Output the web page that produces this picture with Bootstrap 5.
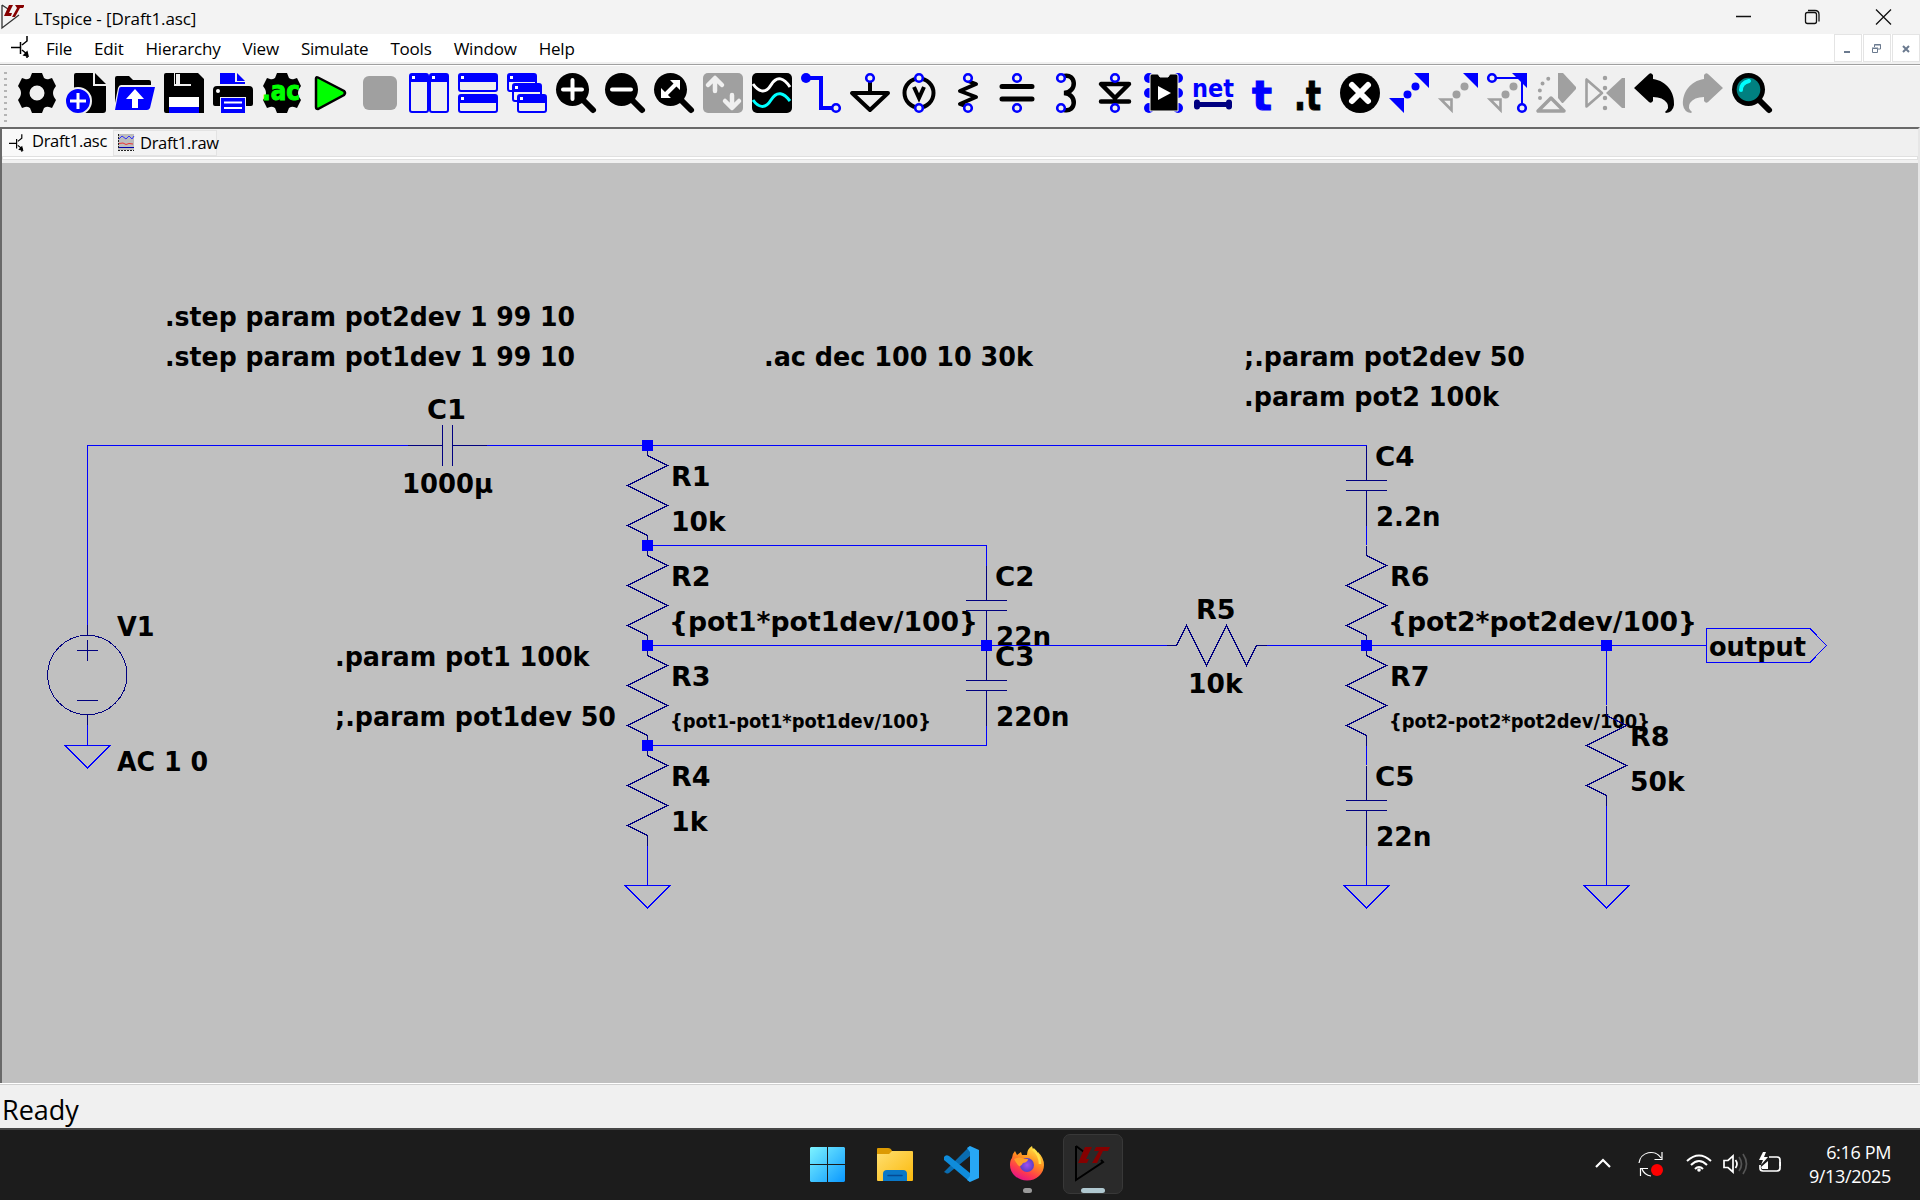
<!DOCTYPE html>
<html lang="en">
<head>
<meta charset="utf-8">
<title>LTspice - [Draft1.asc]</title>
<link href="https://cdn.jsdelivr.net/npm/bootstrap@5.3.0/dist/css/bootstrap.min.css" rel="stylesheet">
<style>
body{font-family:"Open Sans","Noto Sans",sans-serif;color:#000;width:1920px;height:1200px;overflow:hidden;background:#f0f0f0;line-height:1}
svg{display:block;flex:none}
.titlebar{height:34px;background:#f3f3f3;font-size:17px}
.title-text{letter-spacing:-.1px;padding:2px 0 0 10px}
.menubar{height:30px;background:#fff;font-size:17px;border-bottom:2px solid #f0f0f0}
.menu-items{gap:22px;padding-left:17px;letter-spacing:-.2px}
.mdi-group{gap:1px}
.mdi{width:28px;height:28px;border:1px solid #e4e4e4}
.toolbar{height:63px;border-top:1px solid #a0a0a0;box-shadow:inset 0 1px #fff;padding:8px 0 0 4px}
.grip{width:3px;height:54px;margin:-3px 10px 0 0;background:radial-gradient(circle,#b4b4b4 1.3px,transparent 1.5px) 0 0/3px 6px}
.tools{gap:9px}
.tools svg{overflow:visible}
.workframe{height:956px;border-top:2px solid #696969;border-left:2px solid #696969;border-right:2px solid #e6e6e6}
.tabs{height:34px;font-size:16.5px;letter-spacing:-.3px}
.tabrow{height:27px}
.tab-on{width:111px;height:27px;background:#f9f9f9;padding:0 0 2px 7px}
.tab-off{width:104px;height:26px;border:1px solid #e3e3e3;background:#f3f3f3;padding-left:4px;margin-top:1px}
.tabrule{height:4px;border:1px solid #e0e0e0;background:#fff}
.sheet{height:920px;background:#c0c0c0}
.statusbar{height:45px;border-top:1px solid #fff;box-shadow:inset 0 1px #d0d0d0;font-size:27px;padding:6px 0 0 2px}
.taskbar{height:72px;border-top:2px solid #464646;background:#1c1c1c;color:#fff}
.dock{padding-left:810px}
.dock-icons{width:253px}
.dock-tile{width:60px;height:60px;border:1px solid #383838;border-radius:7px;background:#2a2a2a}
.tray{width:190px}
.clock{font-size:18px;line-height:24px;letter-spacing:-.35px;width:110px;margin-right:29px;margin-bottom:2px}
.w{stroke:#00f;fill:none}.n{stroke:#000080;fill:none}
.sheet text{font:bold 27px "DejaVu Sans Condensed","DejaVu Sans",sans-serif;fill:#000}
.sheet text.sm{font-size:19px}
.tools text{font-family:"DejaVu Sans",sans-serif;font-weight:bold}
</style>
</head>
<body class="d-flex flex-column">
<header class="titlebar d-flex align-items-center">
  <svg width="24" height="34"><use href="#lt" x="1" y="4"/></svg>
  <span class="title-text">LTspice - [Draft1.asc]</span>
  <svg class="ms-auto" width="186" height="34" fill="none" stroke="#111" stroke-width="1.3"><path d="M2 16.500h15M142 9.500l15 15m0-15l-15 15"/><rect x="71.500" y="12.500" width="11" height="11" rx="2"/><path d="M74 10.500h7q4 0 4 4v7"/></svg>
</header>
<nav class="menubar d-flex align-items-center">
  <svg width="29" height="28"><use href="#npn" x="11" y="2"/></svg>
  <div class="menu-items d-flex"><span>File</span><span>Edit</span><span>Hierarchy</span><span>View</span><span>Simulate</span><span>Tools</span><span>Window</span><span>Help</span></div>
  <div class="mdi-group d-flex ms-auto">
    <div class="mdi"><svg width="26" height="26"><path d="M9 16h6v2H9z" fill="#6b7a8f"/></svg></div>
    <div class="mdi"><svg width="26" height="26" fill="none" stroke="#6b7a8f"><path d="M8.500 13.500h5v4h-5zM8 13h6M10.500 12v-2.500h6v4.500H14M10.500 10h6"/></svg></div>
    <div class="mdi"><svg width="26" height="26"><path d="M10 11l6 6m0-6l-6 6" stroke="#6b7a8f" stroke-width="2"/></svg></div>
  </div>
</nav>
<div class="toolbar d-flex">
 <div class="grip"></div>
 <div class="tools d-flex">
  <svg width="40" height="40"><path id="gear" fill-rule="evenodd" d="M15 0h10l2 5q3 2 5 1l3-1 4 8-2 3q-2 4 0 8l2 3-4 8-3-1q-2-1-5 1l-2 5H15l-2-5q-3-2-5-1l-3 1-4-8 2-3q2-4 0-8l-2-3 4-8 3 1q2 1 5-1zM20 12.500a7.500 7.500 0 100 15 7.500 7.500 0 000-15z"/></svg>
  <svg width="40" height="40"><path d="M10 0h17v13h13v24q0 3-3 3H8V2q0-2 2-2zM29 0l11 11H29z"/><circle cx="12" cy="28" r="13" fill="#00f" stroke="#f0f0f0" stroke-width="2"/><path d="M12 20v16M4 28h16" stroke="#fff" stroke-width="3"/></svg>
  <svg width="40" height="40"><path d="M0 30V5q0-2 2-2h12l4 4h16q2 0 2 2v3H6q-2 0-3 3z"/><path d="M6 14h34l-5 21q-1 2-3 2H0L4 16q0-2 2-2z" fill="#00f"/><path d="M20 16l9 10h-6v9h-6v-9h-6z" fill="#fff"/></svg>
  <svg width="40" height="40"><path d="M0 2q0-2 2-2h32l6 6v34H2q-2 0-2-2z"/><path d="M10 0h17v13H10z" fill="#f0f0f0"/><path d="M11 0h16v11H11z"/><path d="M12 1h4v10h-4z" fill="#f0f0f0"/><path d="M5 24h30v10H5z" fill="#fff"/><path d="M5 34h30v6H5z" fill="#00f"/></svg>
  <svg width="40" height="40"><path d="M7 11V0h15v11zM24 0l8 8h-8zM22 9h10v2H22z" fill="#00f"/><path d="M4 13h32q4 0 4 4v14q0 2-2 2h-5v-9H7v9H2q-2 0-2-2V17q0-4 4-4z"/><circle cx="5" cy="18" r="2" fill="#fff"/><path d="M8 25h24v15H8z" fill="#00f"/><path d="M11 29.500h18M11 35h18" stroke="#fff" stroke-width="2"/></svg>
  <svg width="40" height="40"><use href="#gear"/><circle cx="20" cy="20" r="9"/><text x="0" y="27" font-size="26" fill="#0f0" stroke="#0f0" textLength="38" lengthAdjust="spacingAndGlyphs">.ac</text></svg>
  <svg width="40" height="40"><path d="M5 5.500q0-2 2-1L33 18q2 2 0 4L7 36q-2 0-2-2z" fill="#0f0" stroke="#000" stroke-width="2.500"/></svg>
  <svg width="40" height="40"><rect x="3" y="3" width="34" height="34" rx="6" fill="#a0a0a0"/></svg>
  <svg width="40" height="40"><g id="win"><rect x="1" y="1" width="18" height="38" rx="2" fill="#f0f0f0" stroke="#00f" stroke-width="2"/><path d="M1 1h18v8H1z" fill="#00f"/><path d="M3 3h3v3H3z" fill="#fff"/></g><use href="#win" x="20"/></svg>
  <svg width="40" height="40"><g id="row2"><rect x="1" y="1" width="38" height="17" rx="2" fill="#f0f0f0" stroke="#00f" stroke-width="2"/><path d="M1 1h38v8H1z" fill="#00f"/><path d="M3 3h3v3H3z" fill="#fff"/></g><use href="#row2" y="21"/></svg>
  <svg width="40" height="40"><g id="cas"><rect x="0" y="0" width="30" height="20" fill="#f0f0f0"/><rect x="1" y="1" width="28" height="17" rx="2" fill="#f0f0f0" stroke="#00f" stroke-width="2"/><path d="M1 1h28v8H1z" fill="#00f"/><path d="M3 3h3v3H3z" fill="#fff"/></g><use href="#cas" x="5" y="10"/><use href="#cas" x="10" y="21"/></svg>
  <svg width="40" height="40"><g id="mag"><circle cx="16.500" cy="16.500" r="16.500"/><path d="M26 26l11 11" stroke="#000" stroke-width="6" stroke-linecap="round"/></g><path d="M16.500 7v19M7 16.500h19" stroke="#fff" stroke-width="4" stroke-linecap="round"/></svg>
  <svg width="40" height="40"><use href="#mag"/><path d="M7 16.500h19" stroke="#fff" stroke-width="4" stroke-linecap="round"/></svg>
  <svg width="40" height="40"><use href="#mag"/><path d="M10 23L23 10" stroke="#fff" stroke-width="4"/><path d="M16 7h10v10zM7 15v10h10z" fill="#fff"/></svg>
  <svg width="40" height="40"><rect width="40" height="40" rx="5" fill="#a0a0a0"/><path d="M12 6v12M5 12l7-7 7 7M29 22v12M22 28l7 7 7-7" fill="none" stroke="#f0f0f0" stroke-width="4.500" stroke-linecap="round" stroke-linejoin="round"/></svg>
  <svg width="40" height="40"><rect width="40" height="40" rx="5"/><path d="M1 11c5 7 12 11 18 1s13-7 19 2" fill="none" stroke="#fff" stroke-width="3"/><path d="M1 27c5 7 12 10 18 0s13-7 19 1" fill="none" stroke="#0ff" stroke-width="3"/></svg>
  <svg width="40" height="40"><path d="M5 5h15v30h14" fill="none" stroke="#00f" stroke-width="4"/><circle cx="5" cy="5" r="5" fill="#00f"/><circle cx="35" cy="35" r="3.800" fill="#f0f0f0" stroke="#00f" stroke-width="2.600"/></svg>
  <svg width="40" height="40"><path d="M20 8v12M2 20h36L20 37z" fill="none" stroke="#000" stroke-width="4" stroke-linejoin="round"/><circle id="pin" cx="20" cy="5" r="3.800" fill="#f0f0f0" stroke="#00f" stroke-width="2.600"/></svg>
  <svg width="40" height="40"><circle cx="20" cy="20" r="14.500" fill="none" stroke="#000" stroke-width="4"/><path d="M15 14l5 11 5-11" fill="none" stroke="#000" stroke-width="4"/><use href="#pin"/><use href="#pin" y="30"/></svg>
  <svg width="40" height="40"><path d="M20 8l8 3-16 7 16 6-16 7 8 3" fill="none" stroke="#000" stroke-width="4" stroke-linejoin="round" stroke-linecap="round"/><use href="#pin"/><use href="#pin" y="30"/></svg>
  <svg width="40" height="40"><path d="M5 13.500h30M5 26h30" stroke="#000" stroke-width="5" stroke-linecap="round"/><use href="#pin"/><use href="#pin" y="30"/></svg>
  <svg width="40" height="40"><path d="M18 3c12-3 14 16 0 17c14 1 12 20 0 17" fill="none" stroke="#000" stroke-width="4.500"/><use href="#pin" x="-5"/><use href="#pin" x="-5" y="30"/></svg>
  <svg width="40" height="40"><path d="M6 11h28L20 25zM6 28.500h28" fill="none" stroke="#000" stroke-width="4.500" stroke-linejoin="round" stroke-linecap="round"/><use href="#pin"/><use href="#pin" y="30"/></svg>
  <svg width="40" height="40"><g fill="#00f"><circle cx="5" cy="5" r="5"/><circle cx="5" cy="20" r="5"/><circle cx="5" cy="35" r="5"/><circle cx="34" cy="5" r="5"/><circle cx="34" cy="20" r="5"/><circle cx="34" cy="35" r="5"/></g><path d="M8 1h6l2 3h8l2-3h6q2 0 2 2v35H6V3q0-2 2-2z" stroke="#f0f0f0"/><path d="M14 13v14l13-7z" fill="#fff"/></svg>
  <svg width="40" height="40"><text x="-1" y="24" font-size="25" fill="#00f" textLength="42" lengthAdjust="spacingAndGlyphs">net</text><path d="M4 31.500h32" stroke="#000080" stroke-width="5"/><path d="M4 29.500v4M36 29.500v4" stroke="#000080" stroke-width="6" stroke-linecap="round"/></svg>
  <svg width="40" height="40"><text x="10" y="36.500" font-size="40" fill="#00f" stroke="#00f" textLength="20" lengthAdjust="spacingAndGlyphs">t</text></svg>
  <svg width="40" height="40"><text x="3" y="36.500" font-size="40" stroke="#000" textLength="27" lengthAdjust="spacingAndGlyphs">.t</text></svg>
  <svg width="40" height="40"><circle cx="20" cy="20" r="20"/><path d="M12 12l16 16m0-16L12 28" stroke="#fff" stroke-width="6" stroke-linecap="round"/></svg>
  <svg width="40" height="40" fill="#00f"><path d="M25 0h15v15zM0 25h15v15z"/><circle cx="18.500" cy="21.500" r="4"/><circle cx="26.500" cy="13.500" r="4"/></svg>
  <svg width="40" height="40" fill="#a0a0a0"><path d="M25 0h15v15z" fill="#00f"/><path d="M3 26.500h10.500v10.500z" fill="none" stroke="#a0a0a0" stroke-width="2.600"/><circle cx="18.500" cy="21.500" r="4"/><circle cx="26.500" cy="13.500" r="4"/></svg>
  <svg width="40" height="40" fill="#a0a0a0"><path d="M3 26.500h10.500v10.500z" fill="none" stroke="#a0a0a0" stroke-width="2.600"/><circle cx="18.500" cy="21.500" r="4"/><circle cx="26.500" cy="13.500" r="4"/><path d="M8 5h27v26" fill="none" stroke="#00f" stroke-width="2"/><path d="M25 0h15v15z" fill="#00f"/><use href="#pin" x="-15"/><use href="#pin" x="15" y="30"/></svg>
  <svg width="40" height="40" fill="#a0a0a0"><path d="M22 0h5l13 14v2L27 30h-1l-4-5z"/><path d="M2 38h26L15 25z" fill="#f0f0f0" stroke="#a0a0a0" stroke-width="3.500" stroke-linejoin="round"/><path d="M4 25c-2-12 4-20 15-21" fill="none" stroke="#a0a0a0" stroke-width="4" stroke-linecap="round" stroke-dasharray="0 7.500"/></svg>
  <svg width="40" height="40" fill="#a0a0a0"><path d="M40 5v30h-3L21 20 37 5z"/><path d="M1.500 6.500v27L17 20z" fill="none" stroke="#a0a0a0" stroke-width="2.600" stroke-linejoin="round"/><path d="M20 5v32" stroke="#a0a0a0" stroke-width="4.500" stroke-linecap="round" stroke-dasharray="0 10"/></svg>
  <svg width="40" height="40"><path id="undo" d="M0 15L15 1q2-2 4 1v4C33 8 41 20 40 32q-1 7-8 8l-1-1q5-4 2-9-4-6-14-6v4q-2 3-4 1z"/></svg>
  <svg width="40" height="40" fill="#a0a0a0"><use href="#undo" transform="matrix(-1 0 0 1 40 0)"/></svg>
  <svg width="40" height="40"><use href="#mag"/><circle cx="16.500" cy="16.500" r="11.800" fill="#008080"/><path d="M9 17q0-7 8-9" fill="none" stroke="#0ff" stroke-width="4" stroke-linecap="round"/></svg>
 </div>
</div>
<main class="workframe">
 <div class="tabs">
  <div class="tabrow d-flex">
   <div class="tab-on d-flex align-items-center"><svg width="23" height="22"><use href="#npn" transform="scale(.8)" x="0" y="4"/></svg><span>Draft1.asc</span></div>
   <div class="tab-off d-flex align-items-center"><svg width="22" height="18"><path d="M0 0h16v16H0z" fill="#bdbdbd"/><path d="M1 5l3-3 4 3 3-3 3 3 2-3" fill="none" stroke="#33f"/><path d="M1 9.500l4-.5 3 1.500 3-1 4 .5" fill="none" stroke="#e33"/><path d="M0 13.500h16" stroke="#00a"/><path d="M0 16.500h16M.5 0v14" stroke="#222" stroke-dasharray="2 1"/></svg><span>Draft1.raw</span></div>
  </div>
  <div class="tabrule"></div>
 </div>
 <svg class="sheet" width="1916" height="920" viewBox="2 163 1916 920" shape-rendering="crispEdges">
  <defs>
   <path id="res" class="n" d="M0 0v10l20 10-40 20 40 20-40 20 20 10v10"/>
   <path id="cap" class="n" d="M0 0v35M-20.500 35h41M-20.500 45h41M0 45v35"/>
   <path id="gnd" class="w" d="M-22.500 0h45L0 22.500z"/>
   <rect id="dot" x="-5.500" y="-5.500" width="11" height="11" fill="#00f"/>
  </defs>
  <g id="labels">
   <text x="165" y="325.700" textLength="410">.step param pot2dev 1 99 10</text>
   <text x="165" y="365.700" textLength="410">.step param pot1dev 1 99 10</text>
   <text x="764" y="365.700" textLength="269">.ac dec 100 10 30k</text>
   <text x="1244" y="365.700" textLength="281">;.param pot2dev 50</text>
   <text x="1244" y="405.700" textLength="255">.param pot2 100k</text>
   <text x="427" y="418.700" textLength="39">C1</text><text x="402" y="492.700" textLength="91">1000µ</text>
   <text x="117" y="635.700" textLength="37.500">V1</text><text x="117" y="770.700" textLength="91">AC 1 0</text>
   <text x="335" y="665.700" textLength="254.500">.param pot1 100k</text>
   <text x="335" y="725.700" textLength="281">;.param pot1dev 50</text>
   <text x="671" y="485.700" textLength="39.500">R1</text><text x="671" y="530.700" textLength="54.500">10k</text>
   <text x="671" y="585.700" textLength="39.500">R2</text><text x="669" y="630.700" textLength="309">{pot1*pot1dev/100}</text>
   <text x="671" y="685.700" textLength="39.500">R3</text><text class="sm" x="670" y="728.300" textLength="261">{pot1-pot1*pot1dev/100}</text>
   <text x="671" y="785.700" textLength="39.500">R4</text><text x="671" y="830.700" textLength="36.500">1k</text>
   <text x="995" y="585.700" textLength="39.500">C2</text><text x="996" y="645.700" textLength="55">22n</text>
   <text x="995" y="665.700" textLength="39.500">C3</text><text x="996" y="725.700" textLength="73.500">220n</text>
   <text x="1375" y="465.700" textLength="39.500">C4</text><text x="1376" y="525.700" textLength="64.500">2.2n</text>
   <text x="1390" y="585.700" textLength="39.500">R6</text><text x="1388" y="630.700" textLength="309">{pot2*pot2dev/100}</text>
   <text x="1390" y="685.700" textLength="39.500">R7</text><text class="sm" x="1389" y="728.300" textLength="261">{pot2-pot2*pot2dev/100}</text>
   <text x="1375" y="785.700" textLength="39.500">C5</text><text x="1376" y="845.700" textLength="55.500">22n</text>
   <text x="1196" y="618.700" textLength="39.500">R5</text><text x="1188" y="693" textLength="54.500">10k</text>
   <text x="1630" y="745.700" textLength="39.500">R8</text><text x="1630" y="790.700" textLength="54.500">50k</text>
   <text x="1709" y="655.700" textLength="97">output</text>
  </g>
  <path class="w" d="M87.500 635V445.500H408M487 445.500H1366.500M647.500 545.500H986.500V566M647.500 645.500H1167M1266 645.500H1706.500M647.500 745.500H986.500V725M87.500 725v20M647.500 845v40M1366.500 525v20M1366.500 745v20M1366.500 845v40M1606.500 645v60M1606.500 805v80M1706.500 628.500H1810L1826.500 645.500 1810 662.500H1706.500z"/>
  <path class="n" d="M408 445.500h34.500M452.500 445.500H487M442.500 425v41M452.500 425v41M87.500 625v10M87.500 715v10M77 650.500h21M87.500 640v21M77 700.500h21"/>
  <circle class="n" cx="87.300" cy="675" r="39.700"/>
  <use href="#res" x="647.500" y="445.500"/><use href="#res" x="647.500" y="545.500"/><use href="#res" x="647.500" y="645.500"/><use href="#res" x="647.500" y="745.500"/>
  <use href="#res" x="1366.500" y="545.500"/><use href="#res" x="1366.500" y="645.500"/><use href="#res" x="1606.500" y="705.500"/>
  <use href="#res" transform="translate(1266.500 645.500) rotate(90)"/>
  <use href="#cap" x="986.500" y="565.500"/><use href="#cap" x="986.500" y="645.500"/><use href="#cap" x="1366.500" y="445.500"/><use href="#cap" x="1366.500" y="765.500"/>
  <use href="#gnd" x="87.500" y="745.500"/><use href="#gnd" x="647.500" y="885.500"/><use href="#gnd" x="1366.500" y="885.500"/><use href="#gnd" x="1606.500" y="885.500"/>
  <use href="#dot" x="647.500" y="445.500"/><use href="#dot" x="647.500" y="545.500"/><use href="#dot" x="647.500" y="645.500"/><use href="#dot" x="647.500" y="745.500"/><use href="#dot" x="986.500" y="645.500"/><use href="#dot" x="1366.500" y="645.500"/><use href="#dot" x="1606.500" y="645.500"/>
 </svg>
</main>
<div class="statusbar d-flex align-items-center">Ready</div>
<footer class="taskbar d-flex">
 <div class="dock d-flex">
  <svg class="dock-icons" height="70" viewBox="810 1130 253 70">
   <defs>
    <linearGradient id="g1" gradientUnits="userSpaceOnUse" x1="810" y1="1147" x2="845" y2="1182"><stop offset="0" stop-color="#7df3ff"/><stop offset="1" stop-color="#0a98ff"/></linearGradient>
    <linearGradient id="g2" x1="0" y1="0" x2="1" y2="1"><stop offset="0" stop-color="#ffdf70"/><stop offset="1" stop-color="#fbb90c"/></linearGradient>
    <linearGradient id="g3" x1=".8" y1="0" x2=".3" y2="1"><stop offset="0" stop-color="#fff04a"/><stop offset=".45" stop-color="#ff8a1e"/><stop offset=".75" stop-color="#ff3b4c"/><stop offset="1" stop-color="#e3108c"/></linearGradient>
    <radialGradient id="g4"><stop offset="0" stop-color="#a050f0"/><stop offset="1" stop-color="#5b3fc4"/></radialGradient>
   </defs>
   <path fill="url(#g1)" d="M811 1147h16v17h-17v-16zM828 1147h16l1 1v16h-17zM810 1165h17v17h-16l-1-1zM828 1165h17v16l-1 1h-16z"/>
   <path d="M877 1149q0-1 1-1h10q3 0 4 3h5v8h-20z" fill="#dc9a02"/><path d="M877 1154h12l3-3h20q1 0 1 1v28q0 1-1 1h-34q-1 0-1-1z" fill="url(#g2)"/><path d="M883 1181v-7q0-4 4-4h16q4 0 4 4v7z" fill="#0a78c8"/><path d="M888 1175.500h14" stroke="#064a93" stroke-width="1.500" stroke-linecap="round"/>
   <path d="M944 1172l26-26v10l-21 17q-2 1-3 0z" fill="#0a6cb0"/><path d="M944 1157q2-3 5-1l21 17v9l-26-22z" fill="#0f8cdb"/><path d="M970 1146l9 4v28l-9 4-3-2 3-4v-24l-3-4z" fill="#27a7f5"/>
   <path d="M1012 1158q0-4 3-7l2 4 4-3 1 3h5q0-6 5-9 1 5 5 8l1-2q6 6 6 13a17 15.500 0 01-34 0q0-5 2-7z" fill="url(#g3)"/><circle cx="1027" cy="1165" r="7" fill="url(#g4)"/><path d="M1014 1159q6-3 10 0l4 0q0 3-5 4-2 4-4 3-3-3-5-7z" fill="#ffa02a"/><path d="M1033 1149q7 6 7 15" fill="none" stroke="#ffe14a" stroke-width="2.500"/>
   <rect x="1023" y="1188" width="9" height="5" rx="2.500" fill="#9a9a9a"/>
  </svg>
  <div class="dock-tile mt-1 d-flex flex-column align-items-center"><svg width="58" height="58">
   <path d="M12 11v34l27-18-2-2M12 11l8 6" fill="none" stroke="#000" stroke-width="2"/><path d="M21 12h7l-6 12h3l-2 4h-9zM32 12h14l-2 4h-5l-6 12h-5l7-12h-5z" fill="#850000"/>
   <rect x="17" y="53" width="24" height="5" rx="2.500" fill="#b0c8d0"/></svg></div>
 </div>
 <div class="ms-auto d-flex align-items-center">
  <svg class="tray" height="70" viewBox="1591 1130 190 70" fill="none" stroke="#fff" stroke-width="1.700">
   <path d="M1596 1167l7-7 7 7" stroke-width="2.200"/>
   <path d="M1639 1163a12 12 0 0122-5M1662 1152v7.500h-7.500M1651 1176a11 11 0 01-9-7M1640.500 1176v-7.500h7.500" stroke-width="1.200"/><circle cx="1657" cy="1170" r="6" fill="red" stroke="none"/>
   <g stroke-width="2"><path d="M1687 1161q12-11 24 0M1691 1165q8-8 16 0M1695 1169q4-4 8 0"/><circle cx="1699" cy="1170" r="1.800" fill="#fff" stroke="none"/></g>
   <path d="M1724 1160.500h4l5-4.500v16l-5-4.500h-4zM1735.500 1160q3 4 0 8"/><path d="M1739 1157q5 7 0 14M1743 1154q7 10 0 20" stroke="#555"/>
   <path d="M1769 1157h8q3 0 3 3v8q0 3-3 3h-14q-3 0-3-3v-3"/><path d="M1781 1162v4" stroke-width="3"/><path d="M1763 1152l-4 8h4l-2 5 7-8h-4l2-5zM1761 1167l7-6v8h-6z" fill="#fff" stroke="none"/>
  </svg>
  <div class="clock text-end text-nowrap">6:16 PM<br>9/13/2025</div>
 </div>
</footer>
<svg width="0" height="0" class="position-absolute"><defs>
 <g id="lt"><path d="M1 1v23l17-13M1 1l6 4" fill="none" stroke="#333" stroke-width="1.300"/><path d="M8 1h4L8 9h3l-1 3H3zM14 1h10l-2 3h-3l-5 9h-3l5-9z" fill="#850000"/></g>
 <g id="npn" fill="none" stroke="#000" stroke-width="1.500"><path d="M0 11.500h10M9.500 6v12M11 9l5-4V0M11 14l5 4v4"/><path d="M17 20l-4-1 3-3z" fill="#000"/></g>
</defs></svg>
<script>
document.querySelectorAll('#labels text').forEach(t => t.setAttribute('lengthAdjust', 'spacingAndGlyphs'));
</script>
<script src="https://cdn.jsdelivr.net/npm/bootstrap@5.3.0/dist/js/bootstrap.bundle.min.js"></script>
</body>
</html>
